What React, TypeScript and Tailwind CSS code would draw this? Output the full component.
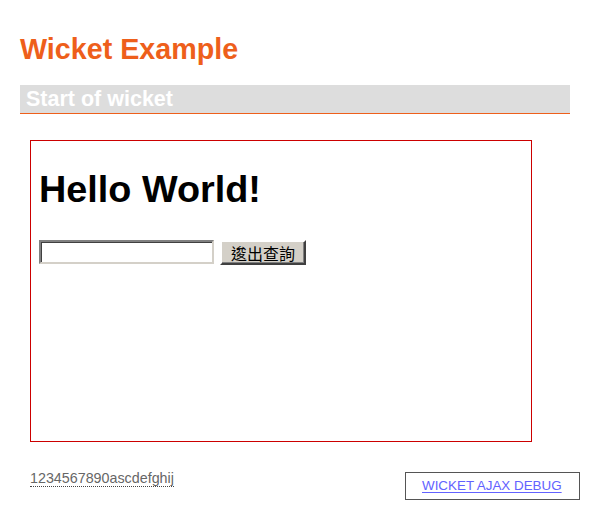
import React from "react";

export default function App() {
  return (
    <div
      className="relative w-[590px] h-[518px] bg-white px-[20px] pt-[34px]"
      style={{ fontFamily: '"Liberation Sans", Arial, sans-serif' }}
    >
      <h1 className="text-[28.7px] leading-[31px] font-bold text-[#ee5f1b]">
        Wicket Example
      </h1>
      <div className="mt-[20px]">
        <div className="h-[28px] bg-[#dddddd] pl-[6px] text-[21.5px] leading-[28px] font-bold text-white">
          Start of wicket
        </div>
        <div className="h-[1px] bg-[#ee5f1b]" />
      </div>
      <div className="ml-[10px] mt-[26px] w-[502px] h-[302px] border border-[#cc0000] px-[8px] pt-[26px]">
        <h2 className="text-[37.8px] leading-[44px] font-bold text-black">
          Hello World!
        </h2>
        <div className="mt-[29px] flex items-start gap-[6px]">
          <input
            type="text"
            className="w-[175px] h-[24px] bg-white border-2 border-t-[#808080] border-l-[#808080] border-r-[#d4d0c8] border-b-[#d4d0c8] shadow-[inset_1px_1px_0_#404040] outline-none"
          />
          <button
            className="w-[86px] h-[25px] bg-[#d4d0c8] border-2 border-t-white border-l-white border-r-[#404040] border-b-[#404040] shadow-[inset_-1px_-1px_0_#808080] text-[16px] leading-[18px] text-black"
            style={{ fontFamily: '"Noto Sans CJK TC", "Noto Sans CJK SC", sans-serif' }}
          >
            逡出查詢
          </button>
        </div>
      </div>
      <div className="ml-[10px] mt-[24px]">
        <span className="inline-block text-[14.3px] leading-[16px] text-[#666666] border-b border-dotted border-[#444444]">
          1234567890ascdefghij
        </span>
      </div>
      <div className="absolute left-[405px] top-[472px] w-[175px] h-[28px] border border-[#555555] bg-white pl-[16px] pt-[5px] text-[13.4px] leading-[16px]">
        <a
          href="#"
          className="text-[#6262ff] underline underline-offset-2"
        >
          WICKET AJAX DEBUG
        </a>
      </div>
    </div>
  );
}
